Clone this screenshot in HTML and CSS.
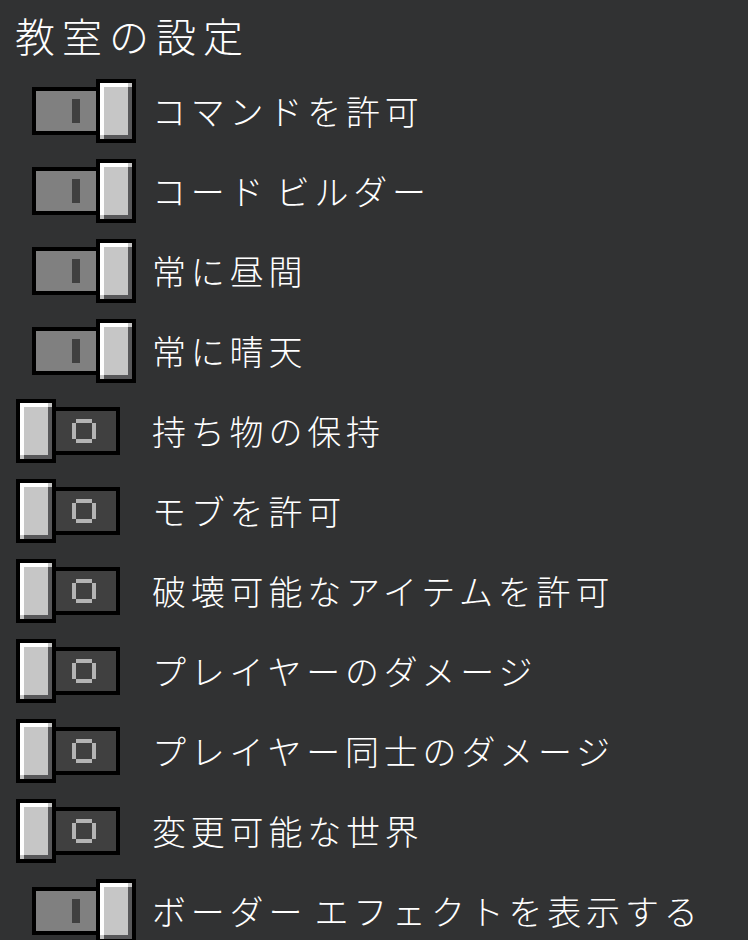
FILE: index.html
```html
<!DOCTYPE html>
<html lang="ja">
<head>
<meta charset="utf-8">
<link rel="stylesheet" href="styles.css">
</head>
<body>
<div class="panel">
  <h1 class="title">教室の設定</h1>
  <ul class="list">
    <li class="row"><span class="cell"><span class="toggle on"><span class="track"><span class="mark-i"></span></span><span class="knob"></span></span></span><span class="label">コマンドを許可</span></li>
    <li class="row"><span class="cell"><span class="toggle on"><span class="track"><span class="mark-i"></span></span><span class="knob"></span></span></span><span class="label">コード ビルダー</span></li>
    <li class="row"><span class="cell"><span class="toggle on"><span class="track"><span class="mark-i"></span></span><span class="knob"></span></span></span><span class="label">常に昼間</span></li>
    <li class="row"><span class="cell"><span class="toggle on"><span class="track"><span class="mark-i"></span></span><span class="knob"></span></span></span><span class="label">常に晴天</span></li>
    <li class="row"><span class="cell"><span class="toggle off"><span class="knob"></span><span class="track"><span class="mark-o"></span></span></span></span><span class="label">持ち物の保持</span></li>
    <li class="row"><span class="cell"><span class="toggle off"><span class="knob"></span><span class="track"><span class="mark-o"></span></span></span></span><span class="label">モブを許可</span></li>
    <li class="row"><span class="cell"><span class="toggle off"><span class="knob"></span><span class="track"><span class="mark-o"></span></span></span></span><span class="label">破壊可能なアイテムを許可</span></li>
    <li class="row"><span class="cell"><span class="toggle off"><span class="knob"></span><span class="track"><span class="mark-o"></span></span></span></span><span class="label">プレイヤーのダメージ</span></li>
    <li class="row"><span class="cell"><span class="toggle off"><span class="knob"></span><span class="track"><span class="mark-o"></span></span></span></span><span class="label">プレイヤー同士のダメージ</span></li>
    <li class="row"><span class="cell"><span class="toggle off"><span class="knob"></span><span class="track"><span class="mark-o"></span></span></span></span><span class="label">変更可能な世界</span></li>
    <li class="row"><span class="cell"><span class="toggle on"><span class="track"><span class="mark-i"></span></span><span class="knob"></span></span></span><span class="label">ボーダー エフェクトを表示する</span></li>
  </ul>
</div>
</body>
</html>
```
FILE: styles.css
```css
html, body {
  margin: 0;
  padding: 0;
  background: #313233;
  height: 100%;
  overflow: hidden;
}
.panel {
  font-family: "Noto Sans CJK JP", "Noto Sans", sans-serif;
  font-weight: 300;
  color: #ffffff;
}
.title {
  margin: 0;
  height: 71px;
  line-height: 71px;
  padding-left: 15px;
  font-size: 40px;
  font-weight: 300;
  letter-spacing: 7px;
}
.list {
  list-style: none;
  margin: 0;
  padding: 0;
}
.row {
  display: flex;
  align-items: center;
  height: 80px;
}
.cell {
  display: flex;
  align-items: center;
  width: 136px;
  padding-left: 16px;
  flex: none;
}
.toggle {
  display: flex;
  align-items: center;
  height: 64px;
}
.toggle.on {
  margin-left: 16px;
}
.knob {
  box-sizing: content-box;
  width: 32px;
  height: 56px;
  border: 4px solid #000;
  background:
    linear-gradient(#fff, #fff) 0 0 / 28px 4px no-repeat,
    linear-gradient(#fff, #fff) 0 0 / 4px 52px no-repeat,
    linear-gradient(#58585a, #58585a) 28px 4px / 4px 52px no-repeat,
    linear-gradient(#58585a, #58585a) 4px 52px / 28px 4px no-repeat,
    #c6c6c6;
  flex: none;
}
.track {
  display: flex;
  align-items: center;
  width: 60px;
  height: 40px;
  border: 4px solid #000;
  flex: none;
}
.on .track {
  border-right: 0;
  background: #808080;
}
.off .track {
  border-left: 0;
  background: #404040;
}
.mark-i {
  width: 8px;
  height: 24px;
  margin-left: 36px;
  background: #404040;
}
.mark-o {
  width: 16px;
  height: 16px;
  margin-left: 16px;
  border: 4px solid transparent;
  background:
    linear-gradient(#b4b4b4, #b4b4b4) 0 -4px / 16px 4px no-repeat,
    linear-gradient(#b4b4b4, #b4b4b4) 0 16px / 16px 4px no-repeat,
    linear-gradient(#b4b4b4, #b4b4b4) -4px 0 / 4px 16px no-repeat,
    linear-gradient(#b4b4b4, #b4b4b4) 16px 0 / 4px 16px no-repeat;
  background-origin: padding-box;
  background-clip: border-box;
}
.label {
  font-size: 34px;
  letter-spacing: 4.8px;
  word-spacing: -5px;
  line-height: 80px;
  white-space: nowrap;
}
```
